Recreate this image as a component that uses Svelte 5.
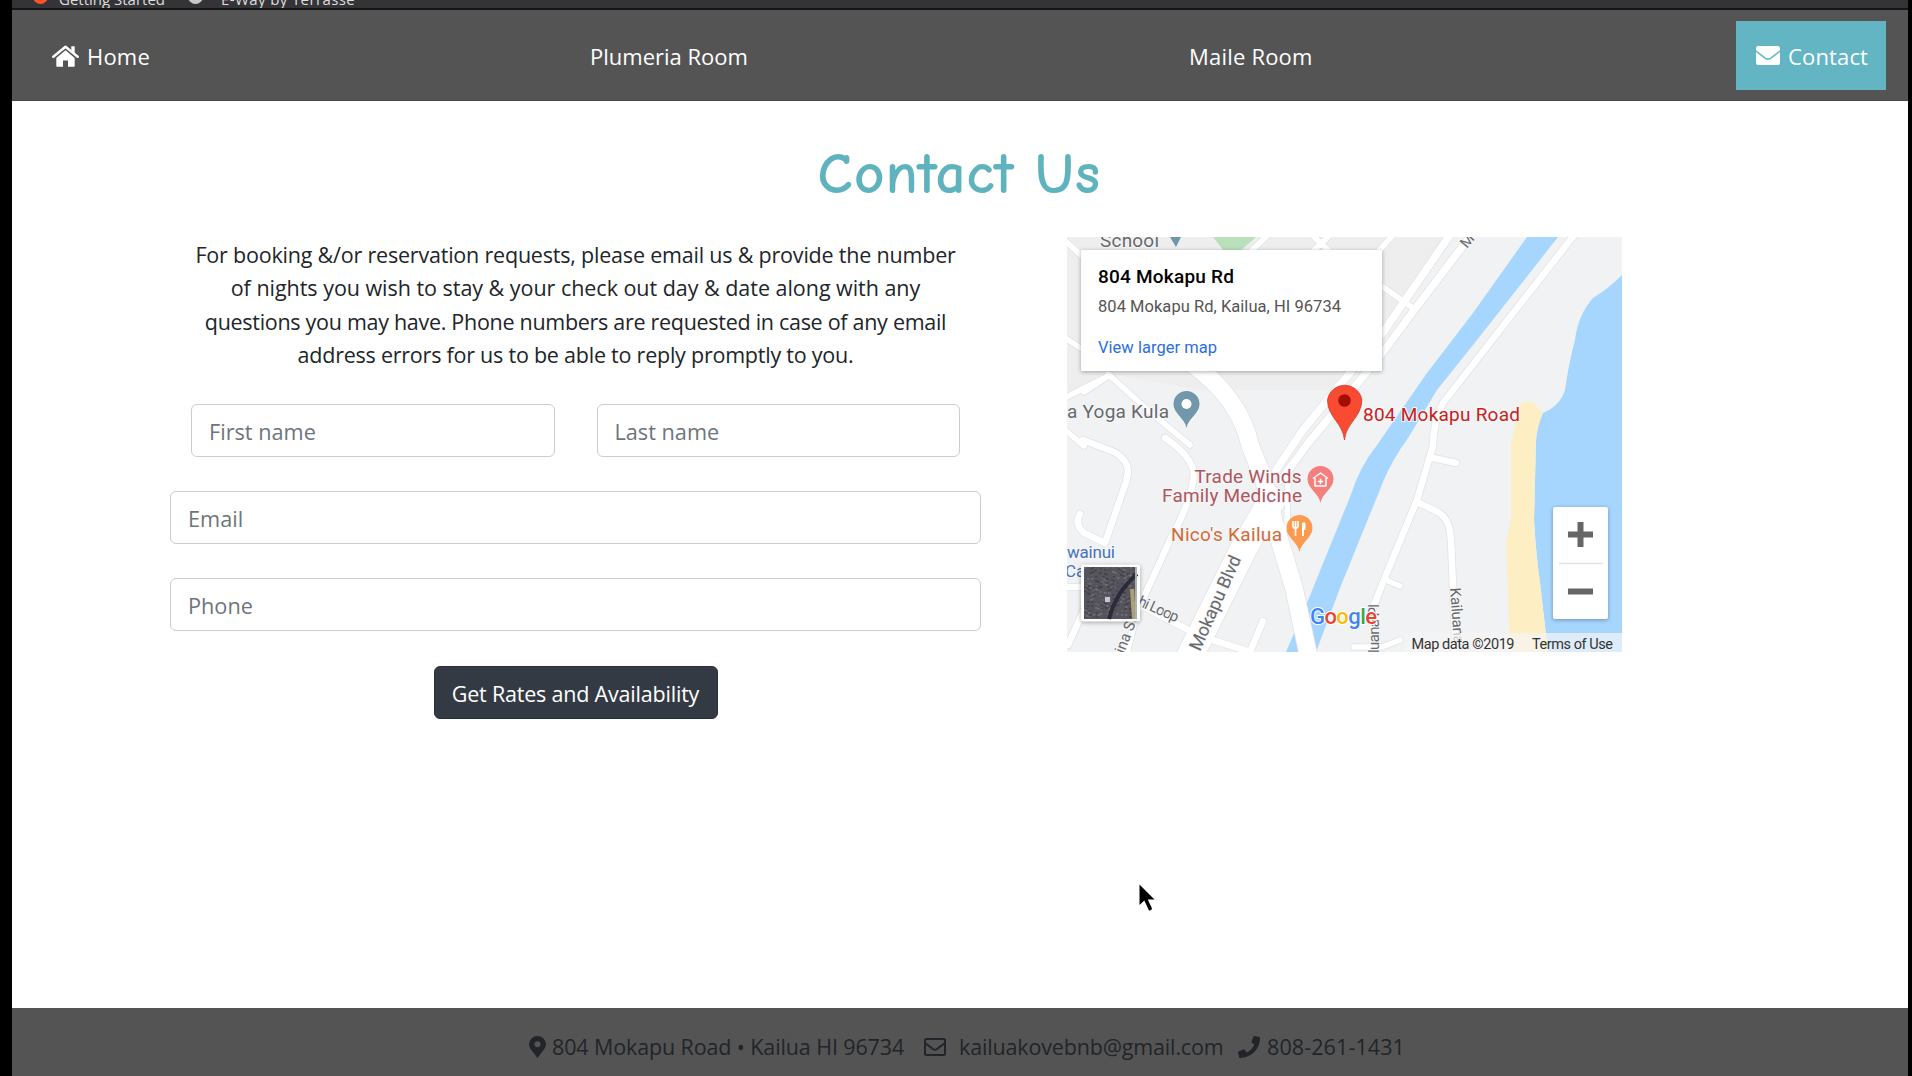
<script>
  const roads = [
    { w: 7, d: 'M1060 236L1084 258M1065 338L1084 350M1065 398L1110 375L1084 392M1108 374L1150 412L1190 445M1065 430L1084 446' },
    { w: 8, d: 'M1083 440L1114 452Q1128 460 1128 472L1126 482L1105 543L1084 533Q1074 524 1080 514' },
    { w: 8, d: 'M1165 438Q1192 456 1194 474Q1192 500 1170 540L1137 612L1126 655' },
    { w: 8, d: 'M1062 587L1084 587M1068 645L1090 596' },
    { w: 8, d: 'M1138 604L1200 636L1250 652L1263 621' },
    { w: 7, d: 'M1268 235L1250 252M1312 235L1330 252M1330 235L1312 252M1393 235L1376 254M1383 287L1413 308' },
    { w: 9, d: 'M1452 232L1382 334L1330 397L1303 430L1276 470' },
    { w: 9, d: 'M1472 234L1415 309L1383 352L1340 405L1309 442L1281 480' },
    { w: 8, d: 'M1575 234L1510 317L1443 403Q1433 422 1433 446L1417 500L1388 570L1370 615' },
    { w: 8, d: 'M1433 458L1456 463M1417 502L1438 512Q1450 519 1451 540L1456 655' },
    { w: 7, d: 'M1386 580L1400 586M1354 647H1382L1400 640' },
    { w: 7, d: 'M1288 478L1287 528' },
    { w: 28, d: 'M1272 500L1244 548L1186 664' },
    { w: 19, d: 'M1190 362Q1240 398 1250 445L1264 480L1274 522L1294 588L1309 658' }
  ];

  const speckles = Array.from({ length: 220 }, (_, i) => ({
    x: (i * 37) % 51,
    y: (i * 23 + ((i * i) % 17)) % 50,
    c: ['#8a8690', '#3d3c45', '#6c6b68', '#302f38'][i % 4]
  }));

  const pin = 'M0 0C-1.5-10-13-14-13-24A13 13 0 0 1 13-24C13-14 1.5-10 0 0Z';
</script>

<div class="screen">
  <div class="browser">
    <i class="dot fox"></i><span class="bm first">Getting Started</span>
    <i class="dot"></i><span class="bm second">E-Way by Terrasse</span>
  </div>

  <nav>
    <a href="#home" class="home">
      <svg width="27" height="22" viewBox="0 0 27 22"><path fill="#fff" d="M13.5 5.2L22.7 13V21q0 .8-.8.8H16V15.5H11V21.8H5.1q-.8 0-.8-.8V13Z" /><path fill="none" stroke="#fff" stroke-width="2.4" stroke-linecap="round" stroke-linejoin="round" d="M1.3 11.7L13.5 1.8L25.7 11.7" /><path fill="#fff" d="M19.3 1.2h3.4v7l-3.4-3Z" /></svg>
      <span>Home</span>
    </a>
    <a href="#plumeria" class="plumeria"><span>Plumeria Room</span></a>
    <a href="#maile" class="maile"><span>Maile Room</span></a>
    <a href="#contact" class="active">
      <svg width="24" height="19" viewBox="0 0 24 19"><rect width="24" height="19" rx="2.3" fill="#fff" /><path d="M0 5L9.5 12.3Q12 14 14.5 12.3L24 5" fill="none" stroke="#63b5c3" stroke-width="1.5" /></svg>
      <span>Contact</span>
    </a>
  </nav>

  <main>
    <h1>Contact Us</h1>
    <div class="columns">
      <section class="contact">
        <p>
          <span class="l1">For booking &amp;/or reservation requests, please email us &amp; provide the number</span>
          <span class="l2">of nights you wish to stay &amp; your check out day &amp; date along with any</span>
          <span class="l3">questions you may have. Phone numbers are requested in case of any email</span>
          <span class="l4">address errors for us to be able to reply promptly to you.</span>
        </p>
        <form>
          <div class="names">
            <input placeholder="First name" />
            <input placeholder="Last name" />
          </div>
          <input placeholder="Email" />
          <input placeholder="Phone" />
          <button type="button">Get Rates and Availability</button>
        </form>
      </section>

      <svg class="map" width="555" height="415" viewBox="1067 237 555 415">
        <rect x="1067" y="237" width="555" height="415" fill="#f0f2f3" />
        <path fill="#eeeeef" d="M1067 237H1452L1382 334L1340 390H1200L1110 374L1067 400Z" />
        <path fill="#b9dfbb" d="M1213 237H1256L1240 251H1224Z" />
        <path fill="#a6d6fe" d="M1527 237L1473 313L1427 373L1377 445Q1360 466 1350 497L1307 603L1286 652H1316L1340 588L1383 482Q1392 460 1408 438L1437 390L1473 345L1558 237Z" />
        <path fill="#a6d6fe" d="M1622 275Q1608 289 1593 298Q1578 315 1575 340Q1569 362 1565 390Q1560 406 1543 413Q1537 426 1536 440L1534 520Q1536 555 1540 583L1548 652H1622Z" />
        <path fill="#fdefc3" d="M1522 402H1533L1543 413Q1537 426 1536 440L1534 520Q1536 555 1540 583L1548 652H1510L1506 543L1511 520V445L1517 412Z" />
        <g fill="none" stroke-linejoin="round" stroke-linecap="round">
          {#each roads as r}<path d={r.d} stroke="#dfe1e3" stroke-width={r.w} />{/each}
          {#each roads as r}<path d={r.d} stroke="#fff" stroke-width={r.w - 1.4} />{/each}
        </g>

        <g class="labels">
          <text x="1100" y="247" textLength="59">School</text>
          <path fill="#7196ab" d="M1170 237H1181L1176 247Z" />
          <text x="1067" y="418" textLength="102">a Yoga Kula</text>
          <g transform="translate(1186.500 428)"><path d={pin} fill="#7297ab" /><circle cy="-24" r="5" fill="#fff" /></g>
          <g fill="#ae5560">
            <text x="1194.500" y="482.500" textLength="107">Trade Winds</text>
            <text x="1162" y="502" textLength="140">Family Medicine</text>
          </g>
          <g transform="translate(1320.500 503)"><path d={pin} fill="#f57f7c" /><path d="M-7.500-24.500L0-30L7.500-24.500M-5.500-25V-17H5.500V-25M-2.800-21.500H2.800M0-24.300V-18.700" fill="none" stroke="#fff" stroke-width="1.500" /></g>
          <text x="1171" y="541" textLength="111" fill="#d26b39">Nico's Kailua</text>
          <g transform="translate(1299.500 552)"><path d={pin} fill="#fd9a4e" /><path d="M-6.500-31V-26Q-6.500-24-4-24Q-1.500-24-1.500-26V-31M-4-31V-16" fill="none" stroke="#fff" stroke-width="1.700" /><path d="M2.500-16V-29Q6-31 6-28V-22H4.500V-16Z" fill="#fff" /></g>
          <text x="1363" y="420.500" textLength="157" fill="#c5221f">804 Mokapu Road</text>
          <g fill="#4472bd" class="small"><text x="1067" y="558" textLength="48">wainui</text><text x="1065" y="577">Camp</text></g>
          <g class="street">
            <text class="blvd" transform="translate(1200 652) rotate(-66)" textLength="102">Mokapu Blvd</text>
            <text transform="translate(1137 605) rotate(24)" textLength="43">hi Loop</text>
            <text transform="translate(1121 662) rotate(-69)" textLength="46">pina St</text>
            <text transform="translate(1450 588) rotate(86)" textLength="56">Kailuana</text>
            <text transform="translate(1379 653) rotate(-90)" textLength="49">luana Pl</text>
            <text transform="translate(1467 249) rotate(-51)">Mokapu</text>
          </g>
        </g>

        <g transform="translate(1344.500 440)">
          <path d="M0 0C-1.500-17-17-23-17-40A17.300 17 0 0 1 17.300-40C17.300-23 1.500-17 0 0Z" fill="#f94b32" stroke="#d43b2b" stroke-width=".8" /><circle cy="-39.500" r="6.300" fill="#a50e05" />
        </g>

        <text class="google" x="1310" y="624" textLength="67"><tspan fill="#4285f4">G</tspan><tspan fill="#ea4335">o</tspan><tspan fill="#fbbc05">o</tspan><tspan fill="#4285f4">g</tspan><tspan fill="#34a853">l</tspan><tspan fill="#ea4335">e</tspan></text>

        <g class="shadow">
          <rect x="1081" y="250" width="301" height="121" rx="1" fill="#fff" />
          <rect x="1081" y="564.500" width="59" height="57" rx="2" fill="#fff" />
          <rect x="1553" y="507" width="55" height="112" rx="2" fill="#fff" />
        </g>
        <g class="card">
          <text class="place" x="1098" y="283" textLength="136">804 Mokapu Rd</text>
          <text x="1098" y="312" textLength="243" fill="#555">804 Mokapu Rd, Kailua, HI 96734</text>
          <text x="1098" y="353" textLength="119" fill="#2a6fe0">View larger map</text>
        </g>
        <g transform="translate(1084 567)">
          <rect width="53" height="52" fill="#55535c" />
          {#each speckles as s}<rect x={s.x} y={s.y} width="2.500" height="1.800" fill={s.c} opacity=".5" />{/each}
          <path d="M53 7Q32 25 25 52" fill="none" stroke="#2b2a38" stroke-width="4" /><path d="M48 22L50 52" stroke="#aaa176" stroke-width="4" /><rect x="21" y="30" width="5" height="5" fill="#c8c5ce" />
          <rect x="51" width="2" height="52" fill="#a9b3ae" />
        </g>
        <path d="M1568 534.500H1593M1580.500 522V547M1568 591.500H1593" stroke="#666" stroke-width="6" /><path d="M1559 563.500H1603" stroke="#e3e3e3" stroke-width="1.300" />
        <rect x="1405" y="633" width="217" height="19" fill="#f5f5f5" opacity=".7" />
        <g class="legal"><text x="1411.500" y="649" textLength="103">Map data ©2019</text><text x="1532" y="649" textLength="81">Terms of Use</text></g>
      </svg>
    </div>
  </main>

  <footer>
    <svg width="17" height="22" viewBox="0 0 17 22"><path d="M8.500 22C6 18 0 13 0 8.300A8.500 8.300 0 0 1 17 8.300C17 13 11 18 8.500 22Z" /><circle cx="8.500" cy="8.300" r="3" fill="#545454" /></svg>
    <span class="address">804 Mokapu Road • Kailua HI 96734</span>
    <svg width="22" height="18" viewBox="0 0 22 18"><rect x="1" y="1" width="20" height="16" rx="1.500" fill="none" stroke="#212529" stroke-width="2" /><path d="M1 5L9 11Q11 12.500 13 11L21 5" fill="none" stroke="#212529" stroke-width="2" /></svg>
    <span class="email">kailuakovebnb@gmail.com</span>
    <svg width="22" height="22" viewBox="0 0 512 512"><path d="M493.400 24.600l-104-24c-11.300-2.600-22.900 3.300-27.500 13.900l-48 112c-4.200 9.800-1.400 21.300 6.900 28l60.600 49.600c-36 76.700-98.900 140.500-177.200 177.200l-49.600-60.600c-6.800-8.300-18.200-11.100-28-6.900l-112 48C3.900 366.500-2 378.100.600 389.400l24 104C27.100 504.200 36.700 512 48 512c256.100 0 464-207.500 464-464 0-11.200-7.700-20.900-18.600-23.400z" /></svg>
    <span class="tel">808-261-1431</span>
  </footer>

  <svg class="cursor" width="18" height="29" viewBox="0 0 18 29"><path d="M.500.500V21L5.300 16.500L10 26.500Q12.500 27 13 24.500L8.800 15.500H15.500Z" /></svg>
</div>

<style>
  :global(body) { margin: 0; background: #000; }
  .screen { box-sizing: border-box; width: 1912px; height: 1076px; padding: 0 4px 0 12px; background: #000; overflow: hidden; display: flex; flex-direction: column; position: relative; font: 22px/33.4px 'Open Sans', 'Noto Sans', sans-serif; color: #212529; }
  .browser { height: 8px; flex: none; background: #343437; border-bottom: 2px solid #151517; overflow: hidden; display: flex; align-items: flex-end; padding-left: 21px; }
  .bm { color: #ddd; font-size: 15px; line-height: 18px; height: 17px; white-space: nowrap; padding-bottom: 1px; }
  .first { width: 118px; margin-left: 11px; margin-right: 11px; }
  .second { margin-left: 18px; letter-spacing: .4px; }
  .dot { width: 15px; height: 15px; border-radius: 50%; background: #c8c8c8; margin-bottom: 4px; flex: none; }
  .fox { background: #ff5327; }
  nav { height: 91px; flex: none; background: #545454; display: flex; align-items: center; padding: 0 22px 0 40px; box-sizing: border-box; border-bottom: 1px solid #444; }
  nav a { color: #fff; text-decoration: none; white-space: nowrap; display: flex; align-items: center; }
  nav a span { padding-top: 3px; }
  .home { width: 538px; gap: 8px; padding-top: 2px; }
  .home span { padding-top: 1px; letter-spacing: .2px; }
  .plumeria { width: 599px; }
  .maile { flex: 1; letter-spacing: .2px; }
  .active { box-sizing: border-box; width: 150px; height: 69px; background: #63b5c3; padding-left: 20px; gap: 8px; margin-top: 1px; letter-spacing: .15px; }
  main { height: 907px; flex: none; background: #fff; }
  h1 { margin: 0; padding-top: 38px; height: 98px; text-align: center; font: 400 55px/70px 'Comic Sans MS', 'Comic Neue', Lato, sans-serif; letter-spacing: 2.600px; color: #5fb3bf; -webkit-text-stroke: 2.100px #5fb3bf; }
  .columns { display: flex; align-items: flex-start; gap: 86px; padding-left: 158px; }
  .contact { width: 811px; }
  p { margin: 0; padding-top: 1px; text-align: center; display: flex; flex-direction: column; align-items: center; white-space: nowrap; font-size: 21.500px; }
  .l1 { letter-spacing: -.2px; }
  .l2 { letter-spacing: -.03px; }
  .l3 { letter-spacing: -.29px; }
  .l4 { letter-spacing: -.23px; }
  form { display: flex; flex-direction: column; align-items: center; gap: 34.300px; padding-top: 32px; }
  .names { width: 769px; display: flex; gap: 42px; }
  input { box-sizing: border-box; width: 100%; min-width: 0; height: 53px; border: 1.500px solid #ccc; border-radius: 6px; padding: 2px 17px 0; font: inherit; font-size: 21.700px; outline: 0; }
  input::placeholder { color: #6c757d; opacity: 1; }
  button { width: 284px; height: 53px; border: 1px solid #292d35; border-radius: 6px; background: #343a44; color: #fff; font: inherit; font-size: 21.500px; letter-spacing: -.2px; padding: 3px 0 0; white-space: nowrap; }
  .map { font-family: Roboto, sans-serif; flex: none; }
  .labels { font-size: 19px; fill: #66696d; stroke-linejoin: round; }
  .labels text { stroke: #f7f7f7; stroke-width: 2px; paint-order: stroke; }
  .small { font-size: 17px; }
  .street { font-size: 15px; }
  .blvd { font-size: 18px; }
  .google { font: 500 22px Roboto, sans-serif; stroke: #fff; stroke-width: 2px; paint-order: stroke; }
  .shadow { filter: drop-shadow(0 1px 2px #0005); }
  .card { font-size: 16.500px; }
  .place { font-size: 19px; font-weight: 500; }
  .legal { font-size: 14.500px; fill: #333; }
  footer { flex: none; height: 68px; background: #545454; display: flex; align-items: center; padding-left: 517px; padding-top: 9px; box-sizing: border-box; white-space: nowrap; font-size: 21.500px; }
  footer svg { fill: #212529; flex: none; }
  footer span { padding-top: 1px; }
  .address { width: 372px; margin-left: 6px; letter-spacing: -.12px; }
  .email { width: 279px; margin-left: 13px; letter-spacing: -.16px; }
  .tel { margin-left: 7px; letter-spacing: .1px; }
  .cursor { position: absolute; left: 1139px; top: 884px; }
</style>
